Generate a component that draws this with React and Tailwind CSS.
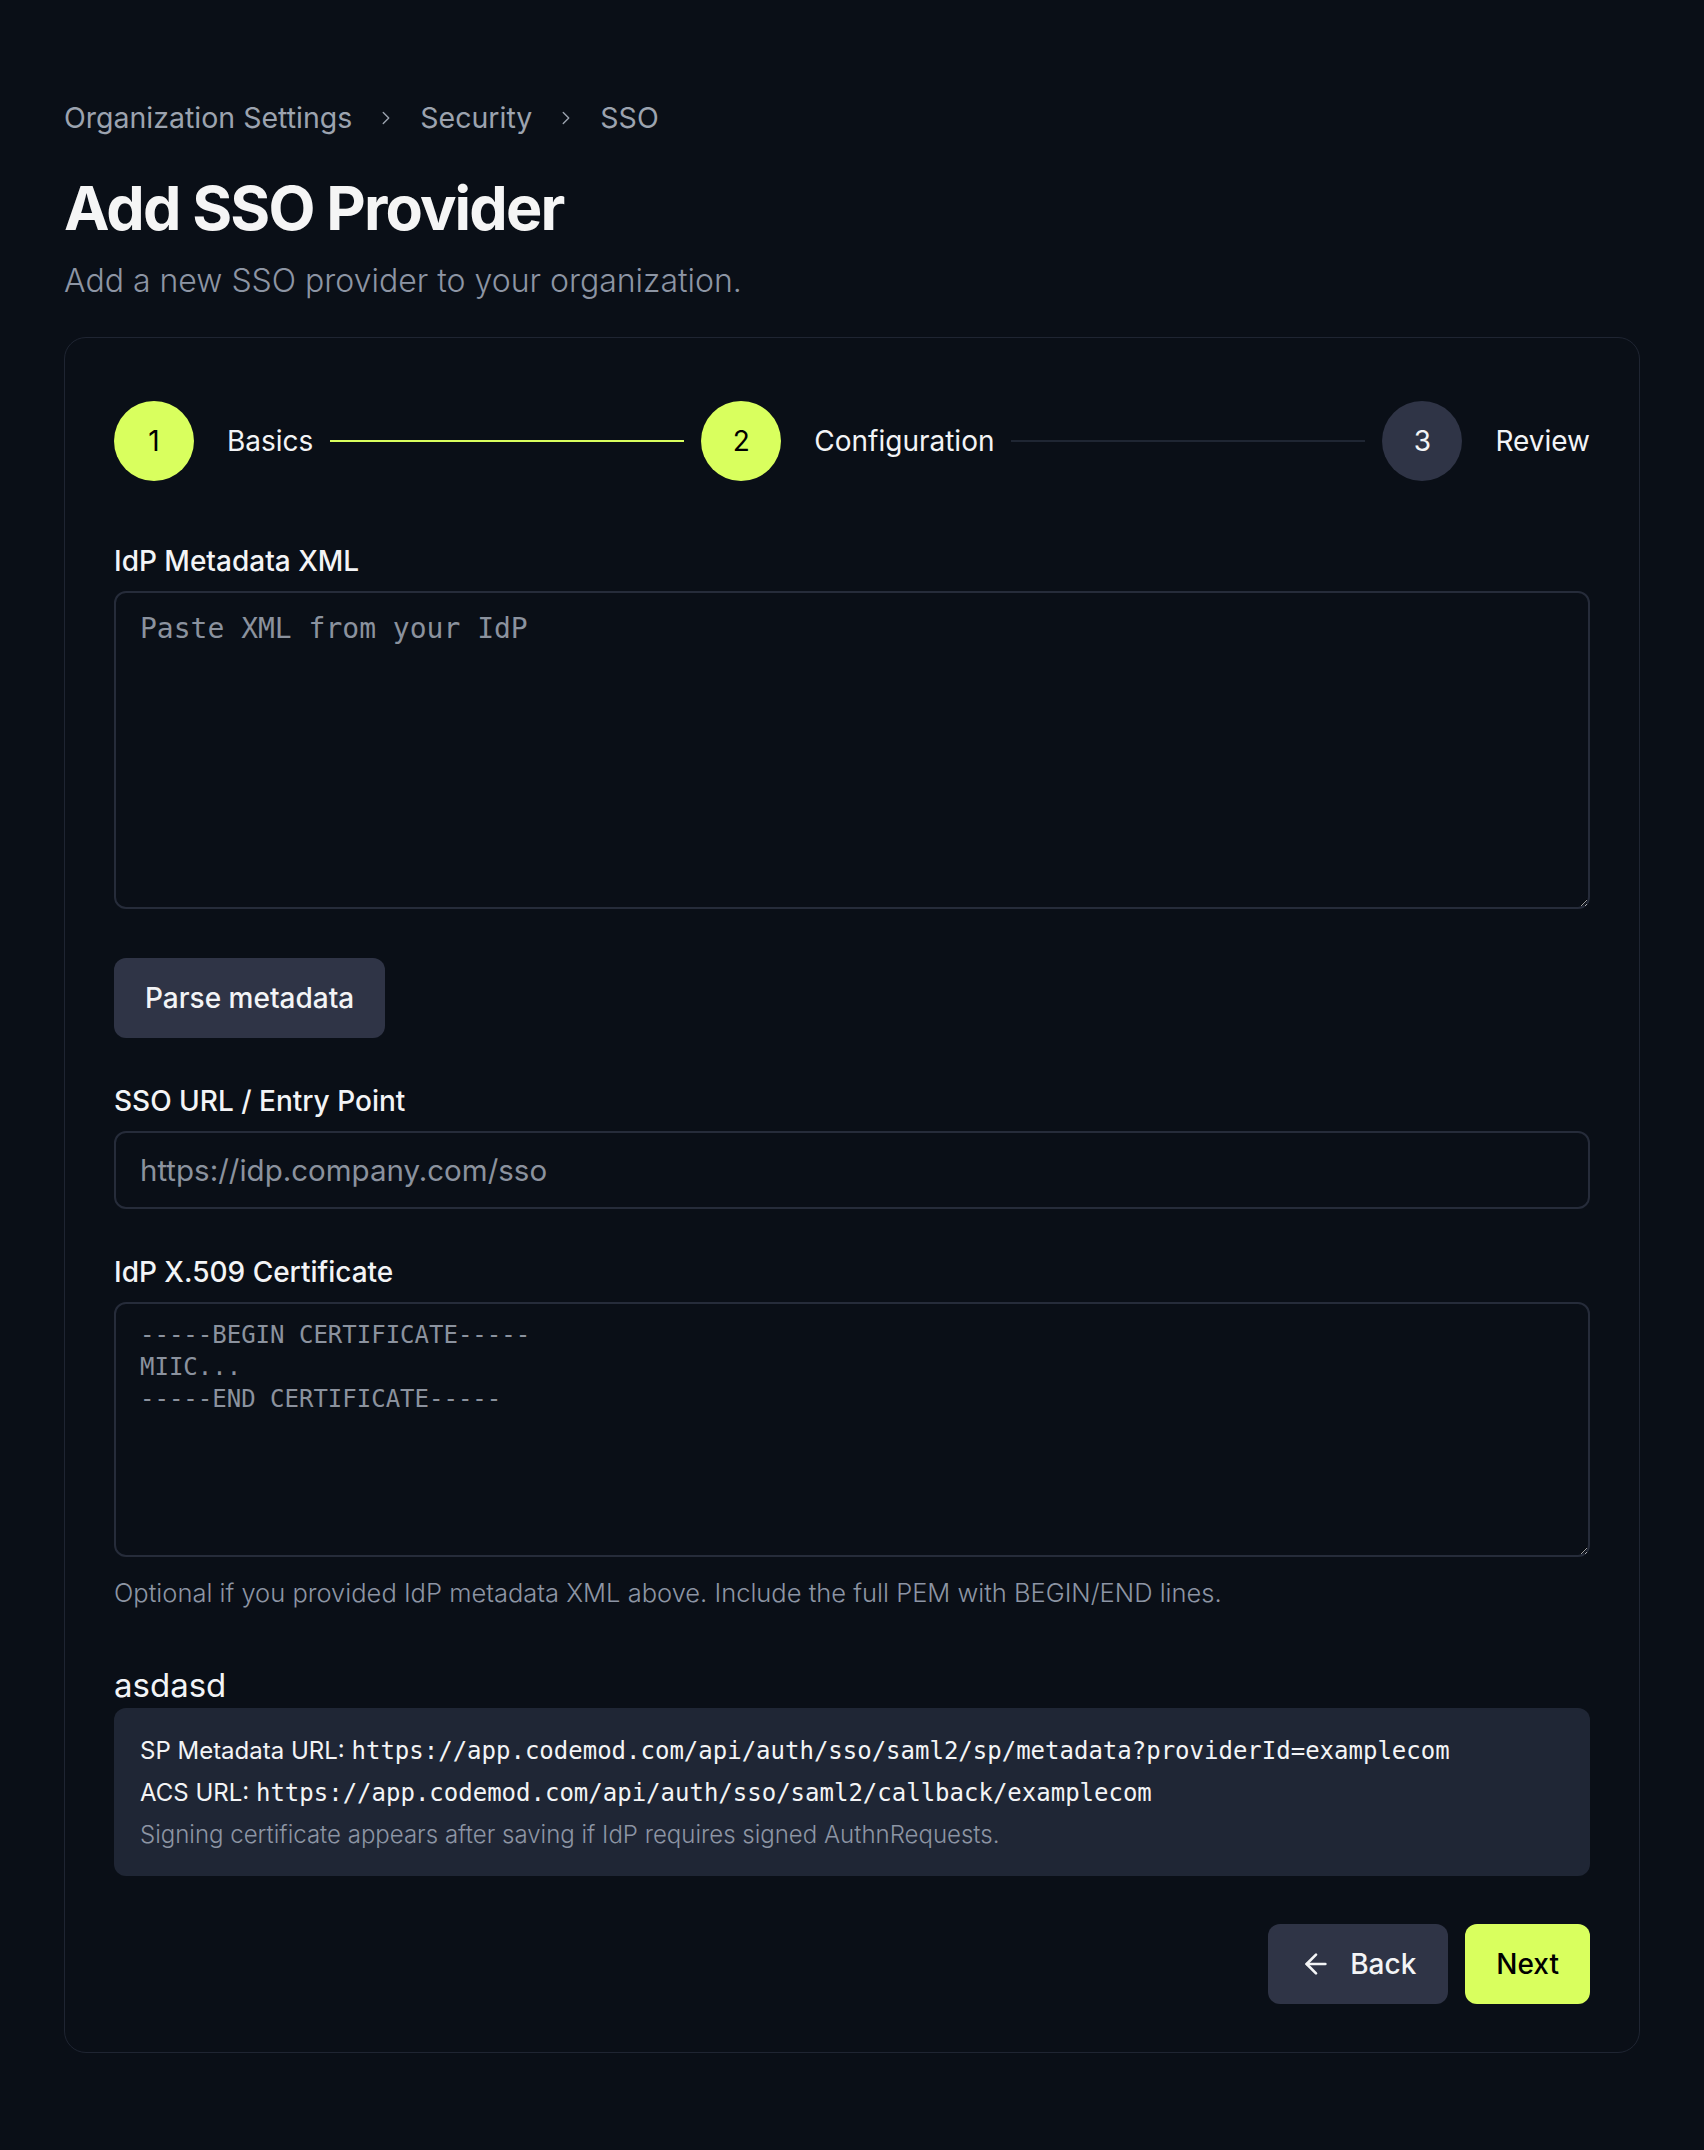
import { ChevronRight, ArrowLeft } from 'lucide-react';

const sans = "font-['Inter','Noto_Sans',sans-serif]";
const mono = "font-['DejaVu_Sans_Mono','Liberation_Mono',monospace]";

function Step({ n, label, active }) {
  return (
    <div className="flex items-center gap-[33px] shrink-0">
      <span
        className={
          active
            ? 'flex h-[80px] w-[80px] items-center justify-center rounded-full bg-[#d9ff5e] text-[28px] text-black'
            : 'flex h-[80px] w-[80px] items-center justify-center rounded-full bg-[#2f3446] text-[28px] text-[#f3f4f6]'
        }
      >
        {n}
      </span>
      <span className="text-[28px] text-[#f3f4f6]">{label}</span>
    </div>
  );
}

export default function App() {
  return (
    <div className={`min-h-[2150px] bg-[#0a0f17] ${sans}`}>
      <div className="px-[64px] pt-[100px]">
        <nav className="flex items-center text-[28.5px] leading-[36px] text-[#9ca3af]">
          <span>Organization Settings</span>
          <ChevronRight className="mx-[23px] h-[22px] w-[22px]" strokeWidth={1.5} />
          <span>Security</span>
          <ChevronRight className="mx-[23px] h-[22px] w-[22px]" strokeWidth={1.5} />
          <span>SSO</span>
        </nav>
        <h1 className="mt-[39px] text-[61px] font-bold leading-[66px] tracking-[-0.03em] text-[#f5f5f5]">
          Add SSO Provider
        </h1>
        <p className="mt-[20px] text-[32px] leading-[40px] font-light text-[#8d95a4]">
          Add a new SSO provider to your organization.
        </p>

        <div className="mt-[36px] rounded-[22px] border border-[#1f2532] px-[49px] pt-[63px] pb-[48px]">
          <div className="flex items-center">
            <Step n="1" label="Basics" active />
            <div className="mx-[17px] h-[2px] flex-1 bg-[#d9ff5e]" />
            <Step n="2" label="Configuration" active />
            <div className="mx-[17px] h-[2px] flex-1 bg-[#1f2633]" />
            <Step n="3" label="Review" />
          </div>

          <label className="mt-[62px] block text-[28px] leading-[36px] font-medium text-[#f3f4f6]">
            IdP Metadata XML
          </label>
          <textarea
            className={`mt-[12px] block h-[318px] w-full rounded-[12px] border-2 border-[#262c3a] bg-transparent px-[24px] py-[15px] text-[28px] leading-[42px] text-[#e5e7eb] placeholder:text-[#8b929e] outline-none ${mono}`}
            placeholder="Paste XML from your IdP"
          />

          <button className="mt-[49px] flex h-[80px] items-center rounded-[12px] bg-[#2f3446] px-[31px] text-[28px] font-medium text-[#f3f4f6]">
            Parse metadata
          </button>

          <label className="mt-[45px] block text-[28px] leading-[36px] font-medium text-[#f3f4f6]">
            SSO URL / Entry Point
          </label>
          <input
            className="mt-[12px] block h-[78px] w-full rounded-[12px] border-2 border-[#262c3a] bg-transparent px-[24px] text-[29.5px] text-[#e5e7eb] placeholder:text-[#8b929e] outline-none"
            placeholder="https://idp.company.com/sso"
          />

          <label className="mt-[45px] block text-[28px] leading-[36px] font-medium text-[#f3f4f6]">
            IdP X.509 Certificate
          </label>
          <textarea
            className={`mt-[12px] block h-[255px] w-full rounded-[12px] border-2 border-[#262c3a] bg-transparent px-[24px] py-[15px] text-[24px] leading-[32px] text-[#e5e7eb] placeholder:text-[#8b929e] outline-none ${mono}`}
            placeholder={'-----BEGIN CERTIFICATE-----\nMIIC...\n-----END CERTIFICATE-----'}
          />
          <p className="mt-[20px] text-[25.5px] leading-[32px] font-light text-[#8d95a4]">
            Optional if you provided IdP metadata XML above. Include the full PEM with BEGIN/END lines.
          </p>

          <h3 className="mt-[56px] text-[33px] leading-[40px] text-[#f3f4f6]">asdasd</h3>
          <div className="mt-[3px] rounded-[12px] bg-[#1f2635] px-[26px] pt-[22px] pb-[21px] text-[24px] leading-[41px]">
            <div className="text-[#f3f4f6]">
              SP Metadata URL:{' '}
              <span className={mono}>https://app.codemod.com/api/auth/sso/saml2/sp/metadata?providerId=examplecom</span>
            </div>
            <div className="text-[#f3f4f6]">
              ACS URL:{' '}
              <span className={mono}>https://app.codemod.com/api/auth/sso/saml2/callback/examplecom</span>
            </div>
            <div className="font-light text-[#8d95a4]">
              Signing certificate appears after saving if IdP requires signed AuthnRequests.
            </div>
          </div>

          <div className="mt-[48px] flex justify-end gap-[17px]">
            <button className="flex h-[80px] items-center gap-[18px] rounded-[12px] bg-[#2f3446] px-[32px] text-[28px] font-medium text-[#f3f4f6]">
              <ArrowLeft className="h-[32px] w-[32px]" strokeWidth={2} />
              Back
            </button>
            <button className="flex h-[80px] items-center rounded-[12px] bg-[#d9ff5e] px-[31px] text-[28px] font-medium text-black">
              Next
            </button>
          </div>
        </div>
      </div>
    </div>
  );
}
